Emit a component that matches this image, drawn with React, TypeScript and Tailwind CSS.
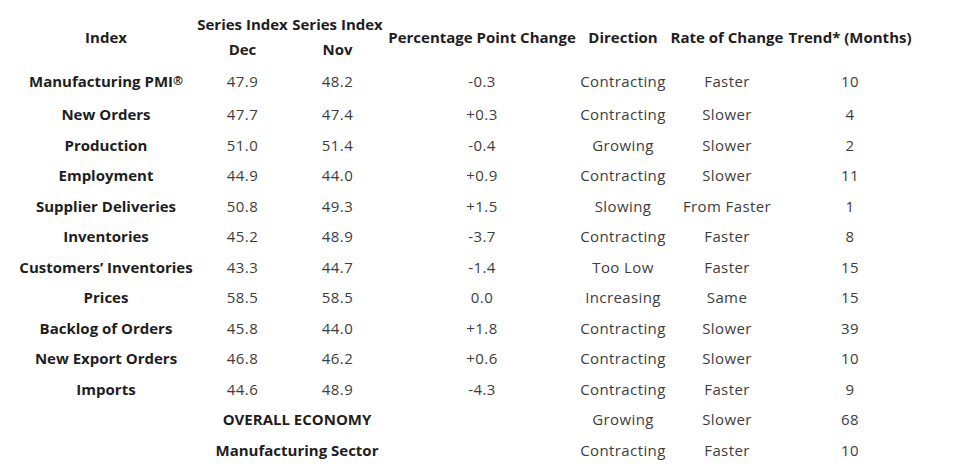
const rows: [string, string, string, string, string, string, string][] = [
  ['New Orders', '47.7', '47.4', '+0.3', 'Contracting', 'Slower', '4'],
  ['Production', '51.0', '51.4', '-0.4', 'Growing', 'Slower', '2'],
  ['Employment', '44.9', '44.0', '+0.9', 'Contracting', 'Slower', '11'],
  ['Supplier Deliveries', '50.8', '49.3', '+1.5', 'Slowing', 'From Faster', '1'],
  ['Inventories', '45.2', '48.9', '-3.7', 'Contracting', 'Faster', '8'],
  ['Customers’ Inventories', '43.3', '44.7', '-1.4', 'Too Low', 'Faster', '15'],
  ['Prices', '58.5', '58.5', '0.0', 'Increasing', 'Same', '15'],
  ['Backlog of Orders', '45.8', '44.0', '+1.8', 'Contracting', 'Slower', '39'],
  ['New Export Orders', '46.8', '46.2', '+0.6', 'Contracting', 'Slower', '10'],
  ['Imports', '44.6', '48.9', '-4.3', 'Contracting', 'Faster', '9'],
];

const th = 'p-0 font-bold text-[15px] leading-[20px] text-[#1e1e1e] text-center';
const td = 'p-0 text-center text-[15px] leading-[20px] tracking-[0.4px] text-[#3d3d3d]';

export default function App() {
  return (
    <div
      className="w-[957px] h-[467px] bg-white pl-[16px] pt-[11px]"
      style={{ fontFamily: '"Open Sans", "Liberation Sans", sans-serif' }}
    >
      <table className="table-fixed border-collapse w-[898px]">
        <colgroup>
          <col className="w-[180px]" />
          <col className="w-[93px]" />
          <col className="w-[97px]" />
          <col className="w-[192px]" />
          <col className="w-[90px]" />
          <col className="w-[118px]" />
          <col className="w-[128px]" />
        </colgroup>
        <thead>
          <tr className="h-[25px]">
            <th rowSpan={2} className={th}>Index</th>
            <th className={th + ' whitespace-nowrap'}>Series Index</th>
            <th className={th + ' whitespace-nowrap'}>Series Index</th>
            <th rowSpan={2} className={th + ' whitespace-nowrap'}>Percentage Point Change</th>
            <th rowSpan={2} className={th}>Direction</th>
            <th rowSpan={2} className={th + ' whitespace-nowrap'}>Rate of Change</th>
            <th rowSpan={2} className={th + ' whitespace-nowrap'}>Trend* (Months)</th>
          </tr>
          <tr className="h-[26px]">
            <th className={th}>Dec</th>
            <th className={th}>Nov</th>
          </tr>
        </thead>
        <tbody>
          <tr className="h-[37px]">
            <td className={th + ' whitespace-nowrap'}>
              Manufacturing PMI<sup className="text-[12px] relative -top-[2px]">®</sup>
            </td>
            <td className={td}>47.9</td>
            <td className={td}>48.2</td>
            <td className={td}>-0.3</td>
            <td className={td}>Contracting</td>
            <td className={td}>Faster</td>
            <td className={td}>10</td>
          </tr>
          {rows.map((r) => (
            <tr key={r[0]} className="h-[30.5px]">
              <td className={th + ' whitespace-nowrap'}>{r[0]}</td>
              {r.slice(1).map((v, i) => (
                <td key={i} className={td + ' whitespace-nowrap'}>{v}</td>
              ))}
            </tr>
          ))}
          <tr className="h-[30.5px]">
            <td />
            <td colSpan={2} className={th + ' whitespace-nowrap pl-[12px]'}>OVERALL ECONOMY</td>
            <td />
            <td className={td}>Growing</td>
            <td className={td}>Slower</td>
            <td className={td}>68</td>
          </tr>
          <tr className="h-[30.5px]">
            <td />
            <td colSpan={2} className={th + ' whitespace-nowrap pl-[12px]'}>Manufacturing Sector</td>
            <td />
            <td className={td}>Contracting</td>
            <td className={td}>Faster</td>
            <td className={td}>10</td>
          </tr>
        </tbody>
      </table>
    </div>
  );
}
